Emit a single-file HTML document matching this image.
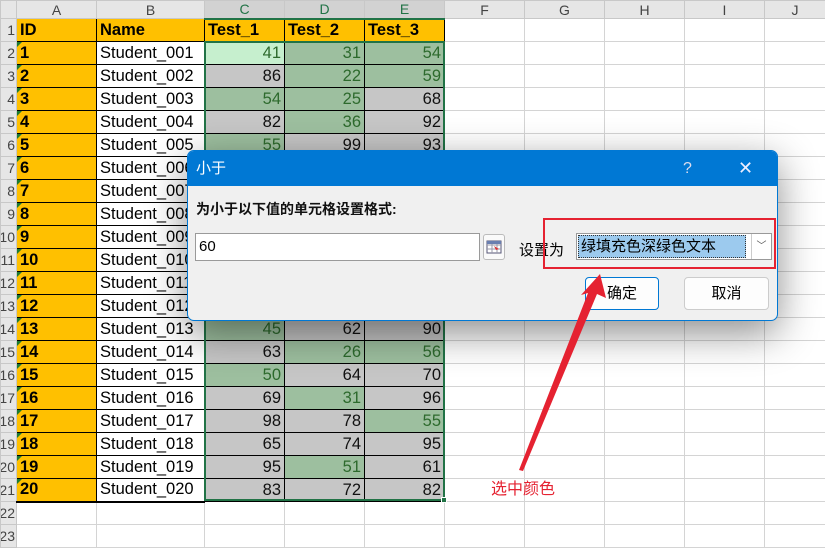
<!DOCTYPE html>
<html><head><meta charset="utf-8"><style>
*{margin:0;padding:0;box-sizing:border-box}
body{width:825px;height:548px;overflow:hidden;background:#fff;font-family:"Liberation Sans","Noto Sans CJK SC",sans-serif;position:relative}
table{border-collapse:collapse;table-layout:fixed;position:absolute;left:0;top:0;width:825px}
td{height:23px;border:1px solid #d4d4d4;font-size:16.5px;padding:0 3px;white-space:nowrap;overflow:hidden;line-height:21px}
tr.h td{height:18px;background:#e6e6e6;color:#444;font-size:14px;text-align:center;line-height:16px;border-color:#c8c8c8}
tr.h td.s{background:#d2d2d2;border-bottom:2px solid #217346;color:#217346}
td.r{background:#e6e6e6;color:#444;font-size:14px;direction:rtl;text-align:right;padding:0 1px;border-color:#c8c8c8}
td.o{background:#ffc000;font-weight:bold;border:1px solid #000;position:relative}
td.o.t::before{content:"";position:absolute;left:0;top:0;border-top:5px solid #1a7a32;border-right:5px solid transparent}
td.n{border:1px solid #000}
td.g{background:#9dbf9f;color:#2d6a2d;text-align:right;border:1px solid #000}
td.y{background:#c6c6c6;color:#111;text-align:right;border:1px solid #000}
td.l{background:#c6efce;color:#2d6a2d;text-align:right;border:1px solid #000}
.sel{position:absolute;left:204px;top:41px;width:241px;height:460px;border:2px solid #217346;pointer-events:none}
.dlg{position:absolute;left:187px;top:150px;width:591px;height:171px;background:#f0f0f0;border:1px solid #0078d4;border-radius:7px;box-shadow:0 12px 40px rgba(0,0,0,.45);overflow:hidden}
.tb{height:35px;background:#0078d4;color:#fff;font-size:15px;line-height:35px;padding-left:8px;position:relative}
.tb .q{position:absolute;left:495px;top:0;font-size:16px;color:#dde}
.tb .x{position:absolute;left:550px;top:0;font-size:18px;color:#eef}
.lb{position:absolute;left:8px;top:48px;font-size:14px;font-weight:bold;color:#111}
.inp{position:absolute;left:7px;top:82px;width:285px;height:28px;background:#fff;border:1px solid #9a9a9a;font-size:15px;line-height:26px;padding-left:3px}
.ib{position:absolute;left:295px;top:83px;width:22px;height:26px;background:#fafafa;border:1px solid #bbb;border-radius:3px}
.sw{position:absolute;left:331px;top:88px;font-size:15px}
.cb{position:absolute;left:388px;top:82px;width:196px;height:27px;background:#fff;border:1px solid #999}
.cb .v{position:absolute;left:1px;top:1px;width:168px;height:23px;background:#9ccaee;border:1px dotted #333;font-size:15px;line-height:21px;padding-left:2px}
.cb .a{position:absolute;right:0;top:0;width:20px;height:25px;border-left:1px solid #ccc;text-align:center;font-size:10px;line-height:25px;color:#555}
.btn{position:absolute;top:126px;width:74px;height:33px;background:#fdfdfd;border:1px solid #ccc;border-radius:4px;font-size:15px;text-align:center;line-height:31px}
.redbox{position:absolute;left:543px;top:218px;width:233px;height:51px;border:2px solid #e52231}
.note{position:absolute;left:491px;top:475px;color:#e52231;font-size:16px}
</style></head><body>
<table>
<colgroup><col style="width:16px"><col style="width:80px"><col style="width:108px"><col style="width:80px"><col style="width:80px"><col style="width:80px"><col style="width:80px"><col style="width:80px"><col style="width:80px"><col style="width:80px"><col style="width:61px"></colgroup>
<tr class="h"><td></td><td>A</td><td>B</td><td class="s">C</td><td class="s">D</td><td class="s">E</td><td>F</td><td>G</td><td>H</td><td>I</td><td>J</td></tr>
<tr><td class="r">1</td><td class="o">ID</td><td class="o">Name</td><td class="o">Test_1</td><td class="o">Test_2</td><td class="o">Test_3</td><td></td><td></td><td></td><td></td><td></td></tr>
<tr><td class="r">2</td><td class="o t">1</td><td class="n">Student_001</td><td class="l">41</td><td class="g">31</td><td class="g">54</td><td></td><td></td><td></td><td></td><td></td></tr>
<tr><td class="r">3</td><td class="o t">2</td><td class="n">Student_002</td><td class="y">86</td><td class="g">22</td><td class="g">59</td><td></td><td></td><td></td><td></td><td></td></tr>
<tr><td class="r">4</td><td class="o t">3</td><td class="n">Student_003</td><td class="g">54</td><td class="g">25</td><td class="y">68</td><td></td><td></td><td></td><td></td><td></td></tr>
<tr><td class="r">5</td><td class="o t">4</td><td class="n">Student_004</td><td class="y">82</td><td class="g">36</td><td class="y">92</td><td></td><td></td><td></td><td></td><td></td></tr>
<tr><td class="r">6</td><td class="o t">5</td><td class="n">Student_005</td><td class="g">55</td><td class="y">99</td><td class="y">93</td><td></td><td></td><td></td><td></td><td></td></tr>
<tr><td class="r">7</td><td class="o t">6</td><td class="n">Student_006</td><td class="y">70</td><td class="y">80</td><td class="y">75</td><td></td><td></td><td></td><td></td><td></td></tr>
<tr><td class="r">8</td><td class="o t">7</td><td class="n">Student_007</td><td class="y">88</td><td class="y">66</td><td class="y">77</td><td></td><td></td><td></td><td></td><td></td></tr>
<tr><td class="r">9</td><td class="o t">8</td><td class="n">Student_008</td><td class="y">72</td><td class="y">90</td><td class="y">84</td><td></td><td></td><td></td><td></td><td></td></tr>
<tr><td class="r">10</td><td class="o t">9</td><td class="n">Student_009</td><td class="y">91</td><td class="y">73</td><td class="y">65</td><td></td><td></td><td></td><td></td><td></td></tr>
<tr><td class="r">11</td><td class="o t">10</td><td class="n">Student_010</td><td class="y">67</td><td class="y">85</td><td class="y">79</td><td></td><td></td><td></td><td></td><td></td></tr>
<tr><td class="r">12</td><td class="o t">11</td><td class="n">Student_011</td><td class="y">79</td><td class="y">68</td><td class="y">88</td><td></td><td></td><td></td><td></td><td></td></tr>
<tr><td class="r">13</td><td class="o t">12</td><td class="n">Student_012</td><td class="y">94</td><td class="y">71</td><td class="y">62</td><td></td><td></td><td></td><td></td><td></td></tr>
<tr><td class="r">14</td><td class="o t">13</td><td class="n">Student_013</td><td class="g">45</td><td class="y">62</td><td class="y">90</td><td></td><td></td><td></td><td></td><td></td></tr>
<tr><td class="r">15</td><td class="o t">14</td><td class="n">Student_014</td><td class="y">63</td><td class="g">26</td><td class="g">56</td><td></td><td></td><td></td><td></td><td></td></tr>
<tr><td class="r">16</td><td class="o t">15</td><td class="n">Student_015</td><td class="g">50</td><td class="y">64</td><td class="y">70</td><td></td><td></td><td></td><td></td><td></td></tr>
<tr><td class="r">17</td><td class="o t">16</td><td class="n">Student_016</td><td class="y">69</td><td class="g">31</td><td class="y">96</td><td></td><td></td><td></td><td></td><td></td></tr>
<tr><td class="r">18</td><td class="o t">17</td><td class="n">Student_017</td><td class="y">98</td><td class="y">78</td><td class="g">55</td><td></td><td></td><td></td><td></td><td></td></tr>
<tr><td class="r">19</td><td class="o t">18</td><td class="n">Student_018</td><td class="y">65</td><td class="y">74</td><td class="y">95</td><td></td><td></td><td></td><td></td><td></td></tr>
<tr><td class="r">20</td><td class="o t">19</td><td class="n">Student_019</td><td class="y">95</td><td class="g">51</td><td class="y">61</td><td></td><td></td><td></td><td></td><td></td></tr>
<tr><td class="r">21</td><td class="o t" style="border-bottom:2px solid #000">20</td><td class="n" style="border-bottom:2px solid #000">Student_020</td><td class="y">83</td><td class="y">72</td><td class="y">82</td><td></td><td></td><td></td><td></td><td></td></tr>
<tr><td class="r">22</td><td></td><td></td><td></td><td></td><td></td><td></td><td></td><td></td><td></td><td></td></tr>
<tr><td class="r">23</td><td></td><td></td><td></td><td></td><td></td><td></td><td></td><td></td><td></td><td></td></tr>
</table>
<div class="sel"></div>
<div style="position:absolute;left:441px;top:497px;width:6px;height:6px;background:#217346;border:1px solid #fff"></div>
<div class="dlg">
<div class="tb">小于<span class="q">?</span><span class="x">✕</span></div>
<div class="lb">为小于以下值的单元格设置格式:</div>
<div class="inp">60</div>
<div class="ib"><svg width="20" height="24" viewBox="0 0 20 24"><rect x="3" y="6" width="14" height="12" fill="#fff" stroke="#557"/><path d="M3 10H17M3 14H17M8 6V18M13 6V18" stroke="#99a" stroke-width="1"/><rect x="3" y="6" width="14" height="3" fill="#6a7fb0"/><path d="M10 11l5 3-3 1z" fill="#d33"/></svg></div>
<div class="sw">设置为</div>
<div class="cb"><div class="v">绿填充色深绿色文本</div><div class="a">﹀</div></div>
<div class="btn" style="left:397px;border:1px solid #0078d4">确定</div>
<div class="btn" style="left:496px;width:85px">取消</div>
</div>
<div class="redbox"></div>
<svg style="position:absolute;left:0;top:0" width="825" height="548"><path d="M519 470 L588 293 L581 295 L600 274 L606 298 L597 294 L523 471 Z" fill="#e52231"/></svg>
<div class="note">选中颜色</div>
</body></html>
